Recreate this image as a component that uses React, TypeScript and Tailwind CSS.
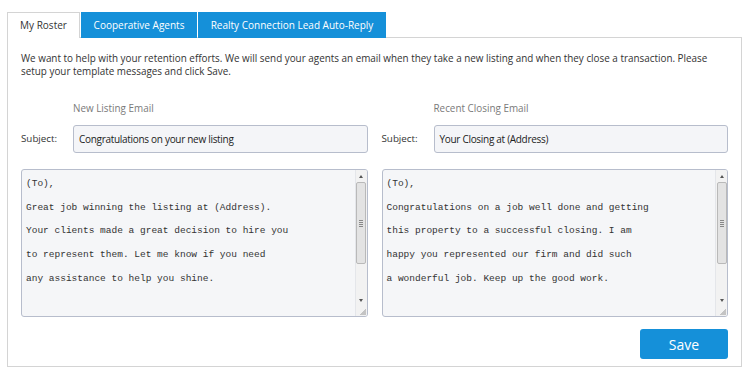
import React from "react"

const font = { fontFamily: '"Open Sans", "Liberation Sans", sans-serif' }

function FakeScroll() {
  return (
    <div className="flex w-[12px] flex-col items-center border-l border-[#e4e6ea] bg-[#f2f2f2]">
      <div className="flex h-[12px] w-full items-center justify-center">
        <div className="h-0 w-0 border-x-[2.5px] border-b-[3px] border-x-transparent border-b-[#555]" />
      </div>
      <div className="flex h-[82px] w-[10px] items-center justify-center rounded-[2px] border border-[#b9b9b9] bg-[#e3e3e3]">
        <div className="flex flex-col gap-[1px]">
          <div className="h-[1px] w-[4px] bg-[#888]" />
          <div className="h-[1px] w-[4px] bg-[#888]" />
          <div className="h-[1px] w-[4px] bg-[#888]" />
          <div className="h-[1px] w-[4px] bg-[#888]" />
        </div>
      </div>
      <div className="flex-1" />
      <div className="flex h-[12px] w-full items-center justify-center">
        <div className="h-0 w-0 border-x-[2.5px] border-t-[3px] border-x-transparent border-t-[#555]" />
      </div>
      <div className="h-[10px]" />
    </div>
  )
}

function EmailColumn({ title, subject, lines }: { title: string; subject: string; lines: string[] }) {
  return (
    <div className="flex flex-col">
      <div className="pl-[52px] text-[9.9px] leading-[15px] text-[#7a7a7a]">{title}</div>
      <div className="mt-[9px] flex items-center">
        <div className="w-[52px] text-[9.8px] text-[#333]">Subject:</div>
        <div className="flex h-[28px] flex-1 items-center rounded-[3px] border border-[#b7bdcc] bg-[#f4f5f8] px-[5px] text-[10px] tracking-[-0.3px] text-[#222]">
          {subject}
        </div>
      </div>
      <div className="relative mt-[16px] flex h-[148px] overflow-hidden rounded-[3px] border border-[#b7bdcc] bg-[#f5f6f8]">
        <div
          className="flex-1 px-[4px] pt-[2px] text-[9.5px] leading-[23.7px] text-[#333]"
          style={{ fontFamily: '"Liberation Mono", "Courier New", monospace' }}
        >
          {lines.map((l, i) => (
            <div key={i}>{l}</div>
          ))}
        </div>
        <FakeScroll />
        <div className="absolute bottom-[1px] right-[1px] h-[6px] w-[6px] bg-[linear-gradient(135deg,transparent_50%,#c4c4c4_50%)]" />
      </div>
    </div>
  )
}

export default function App() {
  return (
    <div className="h-[370px] w-[748px] bg-white pl-[7px] pt-[12px]" style={font}>
      <div className="flex h-[26px] items-stretch gap-[1px] text-[10px]">
        <div className="relative z-10 flex w-[73px] items-center justify-center border border-b-0 border-[#d4d4d4] bg-white text-[#333]">
          My Roster
        </div>
        <div className="flex w-[116px] items-center justify-center bg-[#1590d9] text-white">Cooperative Agents</div>
        <div className="flex w-[188px] items-center justify-center bg-[#1590d9] text-white">
          Realty Connection Lead Auto-Reply
        </div>
      </div>
      <div className="-mt-[1px] h-[330px] w-[735px] border border-[#d4d4d4] px-[13px] pt-[14px]">
        <p className="text-[9.9px] leading-[13px] text-[#333]">
          We want to help with your retention efforts. We will send your agents an email when they take a new listing and
          when they close a transaction. Please setup your template messages and click Save.
        </p>
        <div className="mt-[23px] grid grid-cols-2 gap-[14px]">
          <EmailColumn
            title="New Listing Email"
            subject="Congratulations on your new listing"
            lines={[
              "(To),",
              "Great job winning the listing at (Address).",
              "Your clients made a great decision to hire you",
              "to represent them. Let me know if you need",
              "any assistance to help you shine.",
            ]}
          />
          <EmailColumn
            title="Recent Closing Email"
            subject="Your Closing at (Address)"
            lines={[
              "(To),",
              "Congratulations on a job well done and getting",
              "this property to a successful closing. I am",
              "happy you represented our firm and did such",
              "a wonderful job. Keep up the good work.",
            ]}
          />
        </div>
        <div className="mt-[12px] flex justify-end">
          <button className="h-[30px] w-[88px] rounded-[3px] bg-[#1590d9] text-[14px] text-white">Save</button>
        </div>
      </div>
    </div>
  )
}
